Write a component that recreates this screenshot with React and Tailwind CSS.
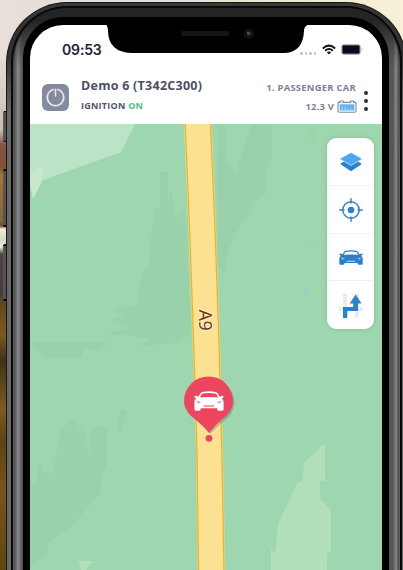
import React from 'react';

function PowerIcon() {
  return (
    <svg viewBox="0 0 27 27" className="h-[27px] w-[27px]" fill="none" stroke="#e4e6ed" strokeWidth="1.6" strokeLinecap="round">
      <path d="M11.2 5.6A8.2 8.2 0 1 0 15.8 5.6" />
      <path d="M13.5 5.2V12" />
    </svg>
  );
}

function WifiIcon() {
  return (
    <svg viewBox="0 0 14 11" className="h-[11px] w-[14px]" fill="none" stroke="#141829" strokeWidth="2">
      <path d="M0.8 4.4Q7 -1.2 13.2 4.4" />
      <path d="M3.1 6.8Q7 3.3 10.9 6.8" />
      <path d="M7 10.5L4.8 8.3Q7 6.5 9.2 8.3Z" fill="#141829" stroke="none" />
    </svg>
  );
}

function BatteryIcon() {
  return (
    <svg viewBox="0 0 22 11" className="h-[11px] w-[22px]">
      <rect x="0.5" y="0.5" width="19" height="10" rx="2.6" fill="#fff" stroke="#b4b6c4" />
      <rect x="1.3" y="1.3" width="17.4" height="8.4" rx="1.2" fill="#080b1b" />
      <path d="M20.6 3.7Q22.4 5.5 20.6 7.3Z" fill="#a7a9b9" />
    </svg>
  );
}

function CarBatteryIcon() {
  return (
    <svg viewBox="0 0 20 13" className="h-[13px] w-[20px]">
      <path d="M1 3.2Q1 2.4 1.8 2.4H3.2V1H6.2V2.4H13.6V1H16.6V2.4H18Q19 2.4 19 3.2V11Q19 12.2 17.8 12.2H2.2Q1 12.2 1 11Z" fill="#f4f8fd" stroke="#858b9b" strokeWidth="1.1" />
      <rect x="2.8" y="4.3" width="14.4" height="6.2" fill="#62b1f7" />
      <path d="M5.2 6V10.5M8 6V10.5M10.8 8V10.5M13.6 8V10.5" stroke="#b5dcfd" strokeWidth="0.8" />
    </svg>
  );
}

function CarShape({ fill, cut, className }) {
  return (
    <svg viewBox="0 0 30 18" preserveAspectRatio="none" className={className}>
      <path
        fill={fill}
        fillRule="evenodd"
        d="M8.3 .8Q15 -.3 21.7 .8Q23.1 1.1 24.2 3L25.6 5.1L28 4.3Q29.8 4.4 29.5 5.7L27.8 6.8Q29.6 8 29.6 10.2V16.3Q29.6 17.7 28.2 17.7H24.6Q23.3 17.7 23.2 16.2V15.6H6.8V16.2Q6.7 17.7 5.4 17.7H1.8Q.4 17.7 .4 16.3V10.2Q.4 8 2.2 6.8L.5 5.7Q.2 4.4 2 4.3L4.4 5.1L5.8 3Q6.9 1.1 8.3 .8ZM8.7 2.3Q7.8 2.5 7.2 3.5L6 5.8Q15 4.8 24 5.8L22.8 3.5Q22.2 2.5 21.3 2.3Q15 1.4 8.7 2.3Z"
      />
      <path fill={cut} d="M2.8 8.6L6.8 10.4Q6 11.4 4.5 11Q2.8 10.6 2.8 8.6ZM27.2 8.6L23.2 10.4Q24 11.4 25.5 11Q27.2 10.6 27.2 8.6ZM9.4 12.9H20.6L19.7 14.1H10.3Z" />
    </svg>
  );
}

function LayersIcon() {
  return (
    <svg viewBox="0 0 24 20" className="h-[20px] w-[24px]">
      <path d="M1.6 11.3L5.2 9.6L12 13.6L18.8 9.6L22.2 11.3Q22.6 12.2 21.8 12.7L12 19.2L2.2 12.7Q1.2 12 1.6 11.3Z" fill="#2c82cf" />
      <path d="M12 .5L22.4 6.3Q22.9 6.9 22.4 7.4L12 13.4L1.6 7.4Q1.1 6.9 1.6 6.3Z" fill="#4aa8f7" stroke="#fff" strokeWidth=".5" />
    </svg>
  );
}

function TargetIcon() {
  return (
    <svg viewBox="0 0 24 24" className="h-[24px] w-[24px]" fill="none" stroke="#3482ca" strokeWidth="1.5">
      <circle cx="12" cy="12" r="8.2" />
      <circle cx="12" cy="12" r="3.3" fill="#2c7fcb" stroke="none" />
      <path d="M12 .2V5.6M12 18.4V23.8M.2 12H5.6M18.4 12H23.8" />
    </svg>
  );
}

function RouteIcon() {
  return (
    <svg viewBox="0 0 24 26" className="h-[26px] w-[24px]">
      <path d="M6 1V25M18 1V25M0 16H24" stroke="#e2e8eb" strokeWidth="4" strokeDasharray="2 .6" />
      <path d="M4 25V14H14.2V10.6H10.6L16.6 1.4L22.6 10.6H19V18H8.3V25Z" fill="#2c82cf" />
    </svg>
  );
}

function MapCanvas() {
  return (
    <svg viewBox="30 124 352 446" className="h-[446px] w-[352px]">
      <rect x="30" y="124" width="352" height="446" fill="#9ed7af" />
      <path d="M30 124H135L121 152L30 185Z" fill="#bae3c7" />
      <path d="M30 176L40 165L43 171L41 183L33 199L30 185Z" fill="#c8e7cc" />
      <g fill="#99d1aa">
        <path d="M160 172H168V204L171 190L176 220L185 206L191 330L174 340L106 334L132 327L109 321L124 314L113 310L137 306L142 272L149 262L154 207L160 208Z" />
        <path d="M217 124H225V160L236 172L252 124H272V164L266 172L266 194L258 199L246 222L242 222L228 250L224 273L218 264Z" />
        <path d="M308 124H318L313 145L307 141L304 146Z" opacity=".5" />
        <path d="M30 343H110L98 349H84L81 357H44L37 347H30Z" />
        <path d="M108 333L142 331L191 330V334L177 343L140 346L154 336Z" />
        <path d="M30 482L37 483V474L40 460L43 472L53 474L60 432L72 418L85 435L90 455L91 427H107V467L102 473L100 493L72 526L49 542L47 554L30 567Z" />
        <path d="M120 409H127V427L124 418L120 435L118 430Z" />
      </g>
      <path d="M325 443V479L327 480L320 481V499L331 510V551L327 554V570H271V549L275 553L278 524L297 483L302 482L304 463Z" fill="#b0dfba" />
      <path d="M78 561H93L86 570H81Z" fill="#b0dfba" />
      <path d="M303.5 287.5H305.5V292.5H303" fill="none" stroke="#95bff0" strokeWidth="1.1" />
      <path d="M312 244V248" stroke="#91c5d6" strokeWidth=".8" />
      <path d="M183.8 124L188.4 230L192 330L196 450L197.5 570H225.3L223 450L219.8 330L216.2 230L211.8 124Z" fill="#bfe3c2" />
      <path d="M185.2 124L189.6 230L193.2 330L197 450L198.5 570H224L221.8 450L218.6 330L215 230L210.5 124Z" fill="#fde192" />
      <path d="M185.2 124L189.6 230L193.2 330L197 450L198.5 570M210.5 124L215 230L218.6 330L221.8 450L224 570" fill="none" stroke="#fab219" strokeWidth="1.3" />
    </svg>
  );
}

function VehicleMarker() {
  return (
    <div className="absolute left-[152px] top-[250px] h-[70px] w-[56px]">
      <svg viewBox="0 0 56 70" className="h-[70px] w-[56px]">
        <path d="M28 60Q22 51 9 42Q4 36 4 28A24.4 24.4 0 0 1 52.6 28Q52 37 46.5 43Q36 52 28 60Z" fill="#397758" opacity=".35" />
        <path d="M27 59Q22 52 8 41Q2 34 2 27A24.5 24.5 0 0 1 51 27Q51 35 45 41Q33 51 27 59Z" fill="#ed4560" />
        <circle cx="27" cy="64.3" r="3.4" fill="#ed4560" />
      </svg>
      <CarShape fill="#fff" cut="#f27f90" className="absolute left-[12px] top-[17px] h-[20px] w-[30px]" />
    </div>
  );
}

function MapTools() {
  const cell = 'flex items-center justify-center border-[#edf0ef]';
  return (
    <div className="absolute left-[297px] top-[14px] grid h-[191px] w-[47px] grid-rows-4 rounded-[9px] bg-white shadow-[0_0_4px_rgba(55,125,80,0.3)]">
      <div className={cell + ' border-b pt-[2px]'}><LayersIcon /></div>
      <div className={cell + ' border-b pt-[2px]'}><TargetIcon /></div>
      <div className={cell + ' border-b pt-[2px]'}><CarShape fill="#2c80cb" cut="#b5d9f5" className="h-[15px] w-[24px]" /></div>
      <div className={cell + ' pt-[2px]'}><RouteIcon /></div>
    </div>
  );
}

function StatusBar() {
  return (
    <div className="relative flex h-[52px] justify-between">
      <div className="ml-[32px] mt-[15px] font-['Inter'] text-[14px] font-semibold leading-[20px] tracking-[-0.15px] text-[#202437]">09:53</div>
      <div className="mr-[19px] mt-[19px] flex h-[11px] items-center">
        <div className="mr-[6px] mt-[8px] flex gap-[2px]">
          <i className="h-[2.5px] w-[2.5px] rounded-full bg-[#bfc0c6]" />
          <i className="h-[2.5px] w-[2.5px] rounded-full bg-[#bfc0c6]" />
          <i className="h-[2.5px] w-[2.5px] rounded-full bg-[#bfc0c6]" />
          <i className="h-[2.5px] w-[2.5px] rounded-full bg-[#bfc0c6]" />
        </div>
        <WifiIcon />
        <div className="ml-[5px]"><BatteryIcon /></div>
      </div>
      <svg viewBox="0 0 206 30" className="absolute left-[75px] top-[-1px] h-[30px] w-[206px]">
        <path d="M0 0H206Q199 1 199 7Q198 28 180 29H26Q4 28 3 8Q3 1 0 0Z" fill="#000" />
        <rect x="76" y="7" width="48" height="5" rx="2.5" fill="#151515" />
        <circle cx="144" cy="10" r="5" fill="#121212" />
        <circle cx="144" cy="9.5" r="2" fill="#363636" />
        <circle cx="143" cy="9" r=".8" fill="#777" />
      </svg>
    </div>
  );
}

function VehicleHeader() {
  return (
    <div className="flex h-[47px] pl-[12px] font-['Open_Sans',sans-serif]">
      <div className="mt-[7px] h-[27px] w-[27px] rounded-[6px] bg-[#858b9e]"><PowerIcon /></div>
      <div className="ml-[12px] w-[126px] whitespace-nowrap">
        <div className="h-[18px] text-[12.5px] font-bold leading-[17px] tracking-[0.26px] text-[#4c5069]">Demo 6 (T342C300)</div>
        <div className="mt-[2px] text-[9px] font-bold leading-[17px] tracking-[0.26px] text-[#50556d]">IGNITION <span className="text-[#4cc184]">ON</span></div>
      </div>
      <div className="ml-auto whitespace-nowrap text-right text-[#7d8296]">
        <div className="mt-[3px] h-[15px] text-[9.4px] font-bold leading-[15px] tracking-[0.28px]">1. PASSENGER CAR</div>
        <div className="-mr-px mt-[3px] flex items-center justify-end gap-[3px] text-[9.4px] font-bold leading-[17px] tracking-[0.2px]">
          <span>12.3 V</span><CarBatteryIcon />
        </div>
      </div>
      <div className="ml-[8px] mr-[14px] mt-[14px] flex h-[20px] flex-col justify-between">
        <i className="h-[4px] w-[4px] rounded-full bg-[#292e46]" />
        <i className="h-[4px] w-[4px] rounded-full bg-[#292e46]" />
        <i className="h-[4px] w-[4px] rounded-full bg-[#292e46]" />
      </div>
    </div>
  );
}

export default function App() {
  return (
    <div className="relative h-[570px] w-[403px] overflow-hidden bg-[linear-gradient(90deg,#e8deda_0,#e2e0d7_45%,#f8f1d7_100%)]">
      <div className="absolute left-0 top-[60px] h-[510px] w-[12px] bg-[linear-gradient(180deg,#e5dbd6_0,#c9bdb5_70px,#815542_85px,#805034_107px,#a17532_115px,#8c6538_160px,#6b4c30_166px,#eee9dc_169px,#d3dcc5_180px,#eee9dc_187px,#50463e_194px,#433d37_232px,#624a20_246px,#7d591b_275px,#40321a_300px,#7b5c1e_350px,#5e4314_380px,#785519_430px,#604510_510px)]" />
      <div className="absolute left-[3px] top-[111px] h-[31px] w-[6px] rounded-l-[2px] border-y border-black bg-[#555]" />
      <div className="absolute left-[3px] top-[169px] h-[58px] w-[6px] rounded-l-[2px] border-y-2 border-black bg-[#555]" />
      <div className="absolute left-[3px] top-[244px] h-[57px] w-[6px] rounded-l-[2px] border-y-2 border-black bg-[#555]" />
      <div className="relative ml-[6px] mt-0 w-[401px] pt-[2px]">
        <div className="h-[580px] rounded-t-[61px] bg-[#151515] p-px">
          <div className="h-full rounded-t-[60px] bg-[linear-gradient(180deg,#383838_0,#303030_50px,#686868_110px)] px-[4px] pt-[3px]">
            <div className="h-full rounded-t-[56px] bg-[#090909] px-[2px] pt-[2px]">
              <div className="h-full rounded-t-[54px] bg-[linear-gradient(180deg,#252525_0,#242424_18px,#4c4c4c_60px,#606060_150px)] px-[1px]">
                <div className="h-full rounded-t-[53px] bg-[linear-gradient(90deg,#4a4a4a_0,#888_4px,#555_8px,#555_376px,#555_379px,#888_382px,#484848_385px)] px-[8px] [mask-image:linear-gradient(180deg,transparent_0,transparent_12px,black_60px)]" />
              </div>
            </div>
          </div>
        </div>
        <div className="absolute left-[17px] top-[17px] h-[570px] w-[366px] rounded-t-[40px] bg-black px-[7px] pt-[8px]">
          <main className="w-[352px] overflow-hidden rounded-t-[33px] bg-white">
            <StatusBar />
            <VehicleHeader />
            <section className="relative h-[446px]">
              <MapCanvas />
              <div className="absolute left-[160px] top-[187px] flex h-[18px] w-[32px] rotate-90 items-center justify-center font-['Noto_Sans',sans-serif] text-[18px] leading-[18px] tracking-[-0.5px] text-[#713d15] [text-shadow:1px_0_#fff2d8,-1px_0_#fff2d8,0_1px_#fff2d8,0_-1px_#fff2d8]">A9</div>
              <VehicleMarker />
              <MapTools />
            </section>
          </main>
        </div>
      </div>
    </div>
  );
}
